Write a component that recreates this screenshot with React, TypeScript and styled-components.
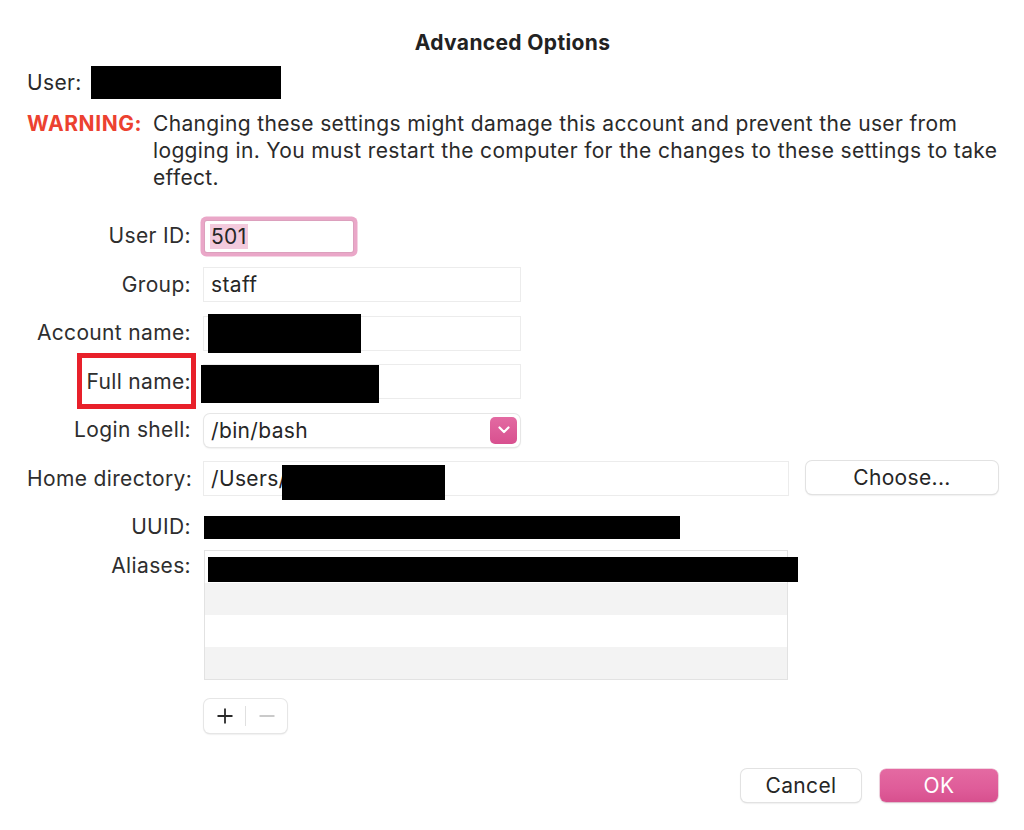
import React from 'react';
import styled, { createGlobalStyle } from 'styled-components';

const GlobalStyle = createGlobalStyle`
  html, body {
    margin: 0;
    padding: 0;
    background: #fff;
  }
  body {
    font-family: Inter, "Liberation Sans", sans-serif;
    font-size: 21px;
    letter-spacing: 0.35px;
    color: #262626;
    -webkit-font-smoothing: antialiased;
  }
`;

const PINK = '#df5c99';

const Dialog = styled.div`
  width: 1024px;
  height: 830px;
  box-sizing: border-box;
  padding: 30px 26px 0 27px;
  display: flex;
  flex-direction: column;
`;

const Title = styled.h1`
  margin: 0;
  font-size: 21px;
  line-height: 26px;
  font-weight: 700;
  text-align: center;
  color: #222;
`;

const UserRow = styled.div`
  display: flex;
  align-items: center;
  gap: 9px;
  margin-top: 10px;
  line-height: 33px;
  color: #2a2a2a;
`;

interface IRedact {
  w: number;
  h: number;
  x?: number;
  y?: number;
}

const Redact = styled.span<IRedact>`
  display: block;
  flex: none;
  width: ${p => p.w}px;
  height: ${p => p.h}px;
  background: #000;
`;

const RedactOver = styled(Redact)`
  position: absolute;
  left: ${p => p.x || 0}px;
  top: ${p => p.y || 0}px;
`;

const Warning = styled.div`
  display: flex;
  margin-top: 11px;
  line-height: 27px;
  color: #2a2a2a;
  white-space: nowrap;
`;

const WarnTag = styled.span`
  width: 126px;
  flex: none;
  font-weight: 700;
  letter-spacing: 0.6px;
  color: #ec4130;
`;

const Form = styled.div`
  display: grid;
  grid-template-columns: 164px 1fr;
  grid-template-rows: repeat(7, 33px) auto;
  column-gap: 13px;
  row-gap: 15.5px;
  margin-top: 28.5px;
  align-items: center;
`;

const Label = styled.div<{ top?: boolean }>`
  line-height: 24px;
  text-align: right;
  color: #2e2e2e;
  white-space: nowrap;
  align-self: ${p => (p.top ? 'start' : 'center')};
  margin-top: ${p => (p.top ? '-5px' : '0')};
`;

const Marked = styled.span`
  position: relative;
  &::before {
    content: '';
    position: absolute;
    left: -9px;
    right: -5px;
    top: -16px;
    bottom: -15px;
    border: 5px solid #e8202a;
  }
`;

const Field = styled.div<{ w: number }>`
  position: relative;
  box-sizing: border-box;
  width: ${p => p.w}px;
  height: 33px;
  padding: 0 7px;
  display: flex;
  align-items: center;
  color: #262626;
  background: #fff;
  box-shadow: 0 0 0 1px #ececec, 0 1px 0 #d9d9d9;
`;

const FocusField = styled(Field)`
  height: 31px;
  margin-left: 1px;
  padding-left: 5px;
  box-shadow: 0 0 0 1px #dca0bd, 0 0 0 4.5px #eaa7c8;
  border-radius: 2px;
`;

const Selected = styled.span`
  background: #f3cadd;
  padding: 0 1px;
`;

const RowWrap = styled.div`
  display: flex;
  align-items: center;
  gap: 18px;
`;

const Popup = styled.div`
  box-sizing: border-box;
  width: 316px;
  height: 33px;
  padding: 0 3px 0 7px;
  display: flex;
  align-items: center;
  justify-content: space-between;
  background: #fff;
  border-radius: 6px;
  box-shadow: 0 0 0 1px #e6e6e6, 0 1px 2px rgba(0, 0, 0, 0.18);
`;

const Chevron = styled.span`
  width: 27px;
  height: 27px;
  border-radius: 5px;
  display: flex;
  align-items: center;
  justify-content: center;
  background: linear-gradient(#e36aa2, #d8508f);
`;

const PushButton = styled.button<{ w: number; primary?: boolean }>`
  box-sizing: border-box;
  width: ${p => p.w}px;
  height: 33px;
  border: none;
  border-radius: 6px;
  font-family: inherit;
  font-size: 21px;
  letter-spacing: 0.35px;
  color: ${p => (p.primary ? '#fff' : '#262626')};
  background: ${p => (p.primary ? `linear-gradient(#e46aa2, ${PINK} 60%, #d7508e)` : '#fff')};
  box-shadow: ${p =>
    p.primary
      ? '0 0 0 0.5px rgba(200,60,120,0.4), 0 1px 2px rgba(0,0,0,0.15)'
      : '0 0 0 1px #e2e2e2, 0 1px 2px rgba(0,0,0,0.2)'};
  padding: 0;
`;

const ChooseButton = styled(PushButton)`
  margin-top: -3px;
`;

const Table = styled.div`
  position: relative;
  align-self: start;
  margin-top: -9px;
  box-sizing: border-box;
  width: 584px;
  height: 130px;
  border: 1px solid #e2e2e2;
  display: grid;
  grid-template-rows: repeat(4, 1fr);
`;

const TableRow = styled.div<{ odd?: boolean }>`
  background: ${p => (p.odd ? '#f3f3f3' : '#fff')};
`;

const Segmented = styled.div`
  display: flex;
  align-items: center;
  width: 83px;
  height: 34px;
  margin: 19px 0 0 177px;
  border-radius: 6px;
  background: #fff;
  box-shadow: 0 0 0 1px #e6e6e6, 0 1px 2px rgba(0, 0, 0, 0.2);
`;

const SegButton = styled.span<{ off?: boolean }>`
  flex: 1;
  display: flex;
  align-items: center;
  justify-content: center;
  height: 100%;
  & + & {
    border-left: 1px solid #e0e0e0;
    height: 20px;
  }
  color: ${p => (p.off ? '#c4c4c4' : '#2a2a2a')};
`;

const Footer = styled.div`
  display: flex;
  justify-content: flex-end;
  gap: 19px;
  margin-top: 36px;
`;

const App: React.FC = () => (
  <Dialog>
    <GlobalStyle />
    <Title>Advanced Options</Title>
    <UserRow>
      <span>User:</span>
      <Redact w={190} h={33} />
    </UserRow>
    <Warning>
      <WarnTag>WARNING:</WarnTag>
      <span>
        Changing these settings might damage this account and prevent the user from
        <br />
        logging in. You must restart the computer for the changes to these settings to take
        <br />
        effect.
      </span>
    </Warning>

    <Form>
      <Label>User ID:</Label>
      <FocusField w={148}>
        <Selected>501</Selected>
      </FocusField>

      <Label>Group:</Label>
      <Field w={316}>staff</Field>

      <Label>Account name:</Label>
      <Field w={316}>
        <RedactOver w={153} h={39} x={4} y={-3} />
      </Field>

      <Label>
        <Marked>Full name:</Marked>
      </Label>
      <Field w={316}>
        <RedactOver w={178} h={38} x={-3} y={0} />
      </Field>

      <Label>Login shell:</Label>
      <Popup>
        <span>/bin/bash</span>
        <Chevron>
          <svg width="12" height="8" viewBox="0 0 12 8">
            <path d="M1.5 1.5 L6 6 L10.5 1.5" fill="none" stroke="#fff" strokeWidth="2.2" strokeLinecap="round" strokeLinejoin="round" />
          </svg>
        </Chevron>
      </Popup>

      <Label>Home directory:</Label>
      <RowWrap>
        <Field w={584}>
          /Users/
          <RedactOver w={163} h={35} x={78} y={3} />
        </Field>
        <ChooseButton w={192}>Choose...</ChooseButton>
      </RowWrap>

      <Label>UUID:</Label>
      <Redact w={476} h={23} />

      <Label top>Aliases:</Label>
      <Table>
        <TableRow />
        <TableRow odd />
        <TableRow />
        <TableRow odd />
        <RedactOver w={590} h={25} x={3} y={6} />
      </Table>
    </Form>

    <Segmented>
      <SegButton>
        <svg width="18" height="18" viewBox="0 0 18 18">
          <path d="M9 1.5v15M1.5 9h15" stroke="currentColor" strokeWidth="1.8" />
        </svg>
      </SegButton>
      <SegButton off>
        <svg width="18" height="18" viewBox="0 0 18 18">
          <path d="M1.5 9h15" stroke="currentColor" strokeWidth="1.8" />
        </svg>
      </SegButton>
    </Segmented>

    <Footer>
      <PushButton w={120}>Cancel</PushButton>
      <PushButton w={118} primary>
        OK
      </PushButton>
    </Footer>
  </Dialog>
);

export default App;
